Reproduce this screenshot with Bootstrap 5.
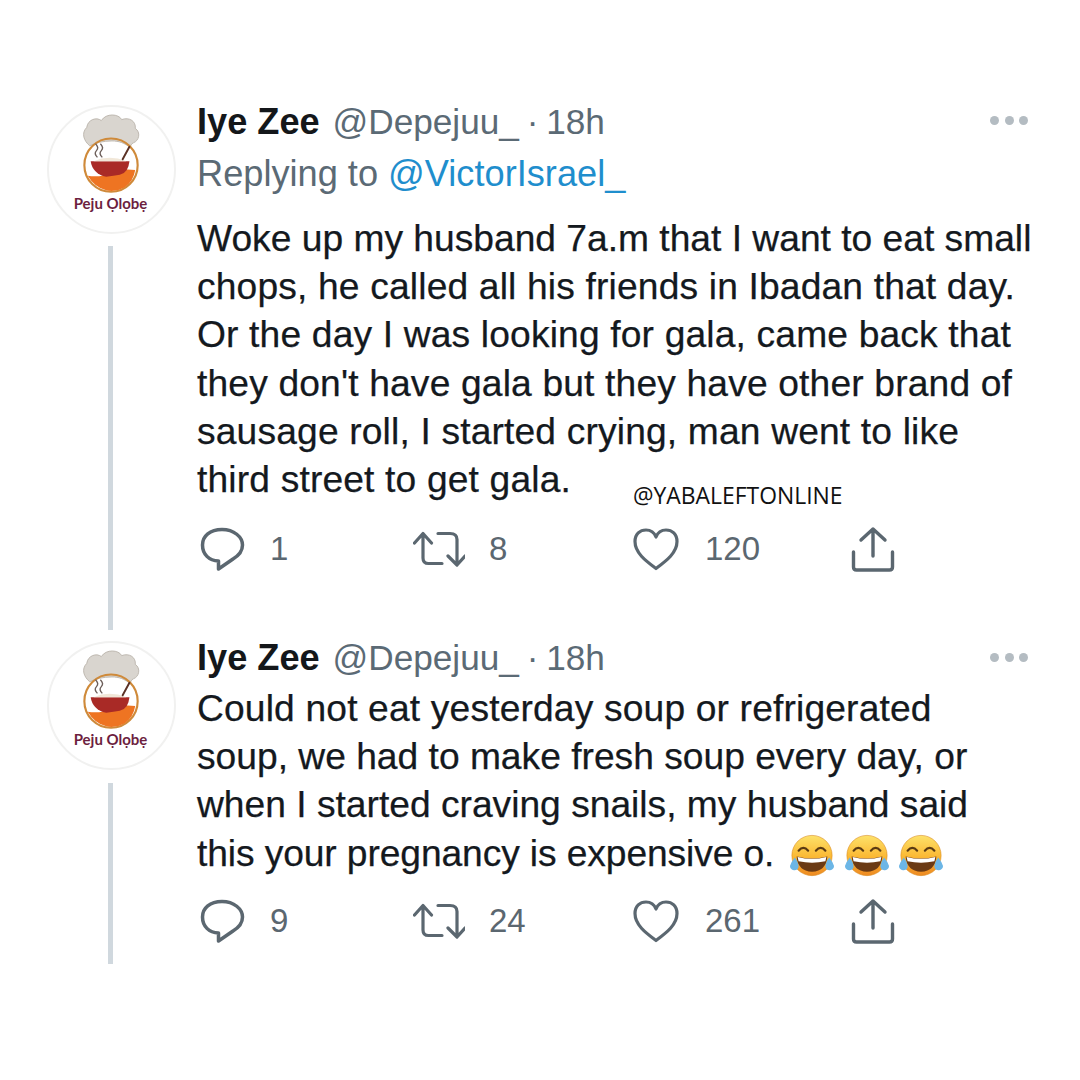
<!DOCTYPE html>
<html lang="en"><head><meta charset="utf-8">
<link href="https://cdn.jsdelivr.net/npm/bootstrap@5.3.0/dist/css/bootstrap.min.css" rel="stylesheet">
<style>
html,body{margin:0;background:#fff;}
body{width:1080px;height:1080px;overflow:hidden;font-family:"Liberation Sans",Arial,sans-serif;color:#14191e;}
.feed{padding-top:97px;padding-left:47px;padding-right:49px;}
.tw{position:relative;}
.tw-a{height:537px;}
.tw-b{height:330px;}
.side{width:150px;flex:none;padding-top:8px;}
.tw-b .side{padding-top:7px;}
.ava{width:129px;height:129px;border-radius:50%;border:2px solid #f1f1f0;background:#fff;flex:none;display:block;}
.thread{width:5px;background:#d0d8de;margin-left:61px;margin-top:12px;flex-grow:1;}
.tw-a .thread{margin-bottom:4px;}
.tw-b .thread{margin-top:13px;}
.bodyc{flex:1;min-width:0;position:relative;}
.hd{font-size:35.2px;line-height:50px;color:#5b6a75;white-space:nowrap;word-spacing:-2px;}
.hd b{color:#14171a;font-weight:700;font-size:36.2px;word-spacing:0;margin-right:5px;}
.tw-b .hd{margin-top:-1px;}
.rep{font-size:36.2px;line-height:48px;color:#5b6a75;margin-top:3px;}
.rep span{color:#1f8ecd;}
.txt{font-size:37.2px;line-height:48.2px;color:#14191e;margin:16px 0 0;white-space:nowrap;-webkit-text-stroke:.25px #14191e;}
.tw-b .txt{margin-top:1px;}
.wider{letter-spacing:.16px;}
.tighter{letter-spacing:-.1px;}
.dots{position:absolute;right:3px;top:19px;display:flex;gap:5.5px;}
.dots i{width:9px;height:9px;border-radius:50%;background:#b4bcc2;display:block;}
.acts{margin-top:21px;color:#5b6770;font-size:33px;line-height:50px;}
.tw-b .acts{margin-top:19px;}
.act{display:flex;align-items:center;}
.a1{width:216px;}.a2{width:222px;}.a3{width:215px;}
.a1 svg{width:48px;height:50px;margin-right:25px;}
.a2 svg{width:52px;height:42px;margin-right:24px;}
.a3 svg{width:48px;height:44px;margin-right:25px;margin-left:-3px;}
.a4{width:48px;height:50px;}
.mark-wm{position:absolute;left:633px;top:481px;font-family:"Open Sans",sans-serif;font-size:22.9px;line-height:30px;color:#111;}
.emo{width:46px;height:43px;vertical-align:-7px;margin-left:8.5px;transform:translateY(4px);}
.emo.first{margin-left:15px;}
.brand{font-family:"Lato",sans-serif;font-weight:700;font-size:15.5px;fill:#6d1f3f;}
</style></head><body>
<svg width="0" height="0" class="position-absolute">
<defs>
<linearGradient id="fg" x1="0" y1="0" x2="0" y2="1"><stop offset="0" stop-color="#fde26a"/><stop offset=".55" stop-color="#fbb732"/><stop offset="1" stop-color="#ee8a22"/></linearGradient>
<symbol id="laugh" viewBox="0 0 48 44">
<circle cx="24" cy="22" r="21" fill="url(#fg)" stroke="#d98a1f" stroke-width=".6"/>
<path d="M10 17q5-6 10 0M28 17q5-6 10 0" fill="none" stroke="#5a3a12" stroke-width="2.2" stroke-linecap="round"/>
<path d="M8 23q16 4 32 0q-1 15-16 16Q9 38 8 23z" fill="#6b3a14"/>
<path d="M9 23.5q15 4 30 0l-1 4.5q-14 3-28 0z" fill="#fff"/>
<path d="M6 24q-4 5-5 9a4.6 4.6 0 0 0 9 1q0-5-4-10zM42 24q4 5 5 9a4.6 4.6 0 0 1-9 1q0-5 4-10z" fill="#6cb6e6"/>
</symbol>
<symbol id="logo" viewBox="0 0 129 129">
<g transform="translate(0 -6)">
<path d="M42 46c-6-5-9-13-3-19 1-8 10-11 15-7 5-8 18-7 21-1 8-3 15 2 14 9 6 4 4 13-2 15-2 1-3 3-3 5-6-5-12-7-19-7-9 0-17 2-23 5z" fill="#d9d5cf" stroke="#bdb7ae" stroke-width="1"/>
<circle cx="64" cy="66" r="27.500" fill="none" stroke="#cf8a3a" stroke-width="2.200"/>
<path d="M40 77q13 2 24-3t25-3q-2 12-11 18-9 5-19 3-12-3-19-15z" fill="#ee7422"/>
<path d="M43 62h40q-1 12-10 14-6 1-14 2-14-3-16-16z" fill="#a92a26"/>
<path d="M46 62q16-7 34 0z" fill="#f1e7d8"/>
<path d="M50 58q-4-4-1-7t-1-7M55 58q-4-4-1-7t-1-7" fill="none" stroke="#6d5f5a" stroke-width="1.400"/>
<path d="M76 60l7-13" stroke="#5b3226" stroke-width="2" stroke-linecap="round"/>
</g>
<text x="63.500" y="105" text-anchor="middle" class="brand">Peju Ọlọbẹ</text>
</symbol>
<symbol id="reply" viewBox="0 0 48 50"><path d="M25 5.500C37 5.500 45.500 13 45.500 21 45.500 28 41 32 36 35L21.500 45V37C12 37 5.500 30 5.500 21 5.500 12 13 5.500 25 5.500z" fill="none" stroke="currentColor" stroke-width="3.500" stroke-linejoin="round"/></symbol>
<symbol id="rt" viewBox="0 0 52 42"><path d="M1.500 15 10 5.500 18.500 15M10 6v24q0 5.500 5.500 5.500H29M25 5.500h12q7 0 7 6V36M35 28l9 9 8-9" fill="none" stroke="currentColor" stroke-width="3.200" stroke-linecap="round" stroke-linejoin="round"/></symbol>
<symbol id="heart" viewBox="0 0 48 44"><path d="M24 41.500C14 34 3 26 3 14.500 3 7 8 3 14 3c4.500 0 8 2 10 7 2-5 5.500-7 10-7 6 0 11 4 11 11.500C45 26 34 34 24 41.500z" fill="none" stroke="currentColor" stroke-width="3.200" stroke-linejoin="round"/></symbol>
<symbol id="share" viewBox="0 0 48 50"><path d="M23 32V5M11 16 23 5l12 11M3.500 28v15q0 3 3 3h33q3 0 3-3V28" fill="none" stroke="currentColor" stroke-width="3.400" stroke-linecap="round" stroke-linejoin="round"/></symbol>
</defs></svg>

<div class="feed">
<article class="tw tw-a d-flex">
 <div class="side d-flex flex-column">
  <svg class="ava"><use href="#logo"/></svg>
  <div class="thread"></div>
 </div>
 <div class="bodyc">
  <div class="hd"><b>Iye Zee</b> @Depejuu_ · 18h</div>
  <div class="rep">Replying to <span>@VictorIsrael_</span></div>
  <p class="txt">Woke up my husband 7a.m that I want to eat small<br><span class="wider">chops, he called all his friends in Ibadan that day.<br>Or the day I was looking for gala, came back that<br>they don't have gala but they have other brand of<br>sausage roll, I started crying, man went to like<br>third street to get gala.</span></p>
  <div class="dots"><i></i><i></i><i></i></div>
  <div class="acts d-flex">
   <div class="act a1"><svg><use href="#reply"/></svg>1</div>
   <div class="act a2"><svg><use href="#rt"/></svg>8</div>
   <div class="act a3"><svg><use href="#heart"/></svg>120</div>
   <svg class="a4"><use href="#share"/></svg>
  </div>
 </div>
</article>
<article class="tw tw-b d-flex">
 <div class="side d-flex flex-column">
  <svg class="ava"><use href="#logo"/></svg>
  <div class="thread"></div>
 </div>
 <div class="bodyc">
  <div class="hd"><b>Iye Zee</b> @Depejuu_ · 18h</div>
  <p class="txt"><span class="wider">Could not eat yesterday soup or refrigerated</span><br>soup, we had to make fresh soup every day, or<br>when I started craving snails, my husband said<br><span class="tighter">this your pregnancy is expensive o.</span><svg class="emo first"><use href="#laugh"/></svg><svg class="emo"><use href="#laugh"/></svg><svg class="emo"><use href="#laugh"/></svg></p>
  <div class="dots"><i></i><i></i><i></i></div>
  <div class="acts d-flex">
   <div class="act a1"><svg><use href="#reply"/></svg>9</div>
   <div class="act a2"><svg><use href="#rt"/></svg>24</div>
   <div class="act a3"><svg><use href="#heart"/></svg>261</div>
   <svg class="a4"><use href="#share"/></svg>
  </div>
 </div>
</article>
</div>
<div class="mark-wm">@YABALEFTONLINE</div>
<script src="https://cdn.jsdelivr.net/npm/bootstrap@5.3.0/dist/js/bootstrap.bundle.min.js"></script>
</body></html>
